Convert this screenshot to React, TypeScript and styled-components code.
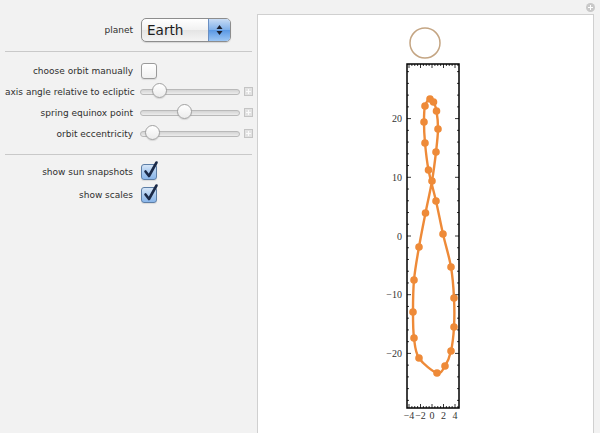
import React from 'react';
import styled, { createGlobalStyle } from 'styled-components';

const GlobalStyle = createGlobalStyle`
  html, body {
    margin: 0;
    padding: 0;
    background: #f2f2f2;
    overflow: hidden;
  }
`;

const Page = styled.div`
  display: flex;
  width: 600px;
  height: 433px;
  position: relative;
  font-family: 'DejaVu Sans', 'Liberation Sans', sans-serif;
  color: #2e2e2e;
`;

const Controls = styled.div`
  width: 247px;
  padding: 18px 5px 0 5px;
  display: flex;
  flex-direction: column;
`;

const Row = styled.div<{ h?: number }>`
  display: grid;
  grid-template-columns: 128px 1fr;
  column-gap: 7px;
  align-items: center;
  height: ${p => p.h || 21}px;
`;

const Label = styled.span`
  text-align: right;
  font-size: 9px;
  white-space: nowrap;
`;

const Divider = styled.div<{ top: number; bottom: number }>`
  height: 1px;
  background: #c9c9c9;
  margin: ${p => p.top}px 0 ${p => p.bottom}px 0;
`;

const Popup = styled.div`
  display: flex;
  width: 88px;
  height: 22px;
  margin-left: 1px;
  border: 1px solid #8d8d8d;
  border-radius: 5px;
  overflow: hidden;
  background: linear-gradient(#ffffff, #f1f1f1 50%, #e4e4e4 51%, #f4f4f4);
  box-shadow: 0 1px 1px rgba(0, 0, 0, 0.12);
`;

const PopupText = styled.span`
  flex: 1;
  padding-left: 5px;
  font-size: 13.6px;
  line-height: 22px;
  color: #1c1c1c;
`;

const PopupArrows = styled.div`
  width: 21px;
  border-left: 1px solid #6b8fc2;
  background: linear-gradient(#c8dcf5, #7fb0ea 50%, #5a98e4 51%, #9cc6f4);
  display: flex;
  align-items: center;
  justify-content: center;
`;

const Box = styled.div<{ checked?: boolean }>`
  width: 14px;
  height: 14px;
  margin-left: 1px;
  border: 1px solid ${p => (p.checked ? '#5d7ea6' : '#9a9a9a')};
  border-radius: 3px;
  background: ${p =>
    p.checked
      ? 'linear-gradient(#d6e6f8, #a7c8ee 55%, #8ab6ea)'
      : 'linear-gradient(#ffffff, #f0f0f0)'};
  position: relative;
  box-shadow: 0 1px 1px rgba(0, 0, 0, 0.1);
`;

const CheckMark = styled.svg`
  position: absolute;
  left: 1px;
  top: -5px;
`;

const SliderWrap = styled.div`
  display: flex;
  align-items: center;
  gap: 4px;
`;

const Track = styled.div`
  width: 98px;
  height: 4px;
  border: 1px solid #b9b9b9;
  border-radius: 3px;
  background: linear-gradient(#d4d4d4, #ececec);
  position: relative;
`;

const Thumb = styled.div`
  position: absolute;
  top: -7px;
  width: 15px;
  height: 15px;
  border-radius: 50%;
  border: 1px solid #a2a2a2;
  background: linear-gradient(#ffffff, #ececec);
  box-sizing: border-box;
  box-shadow: 0 1px 1px rgba(0, 0, 0, 0.12);
`;

const PlusBox = styled.div`
  width: 7px;
  height: 7px;
  border: 1px solid #c4c4c4;
  background: #e2e2e2;
  position: relative;
  &::before,
  &::after {
    content: '';
    position: absolute;
    background: #fafafa;
  }
  &::before {
    left: 3px;
    top: 1px;
    width: 1px;
    height: 5px;
  }
  &::after {
    left: 1px;
    top: 3px;
    width: 5px;
    height: 1px;
  }
`;

const PlotPanel = styled.div`
  margin-top: 14px;
  width: 335px;
  height: 425px;
  background: #ffffff;
  border: 1px solid #d0d0d0;
`;

const Corner = styled.div`
  position: absolute;
  right: 5px;
  top: 3px;
  width: 9px;
  height: 9px;
  border-radius: 50%;
  background: #c9c9c9;
  &::before,
  &::after {
    content: '';
    position: absolute;
    background: #fff;
  }
  &::before {
    left: 4px;
    top: 2px;
    width: 1px;
    height: 5px;
  }
  &::after {
    left: 2px;
    top: 4px;
    width: 5px;
    height: 1px;
  }
`;

// snapshot positions of the sun (page pixels)
const pts: [number, number][] = [
  [430, 99], [433.5, 102], [436.5, 111], [438, 129], [436, 152], [432, 181],
  [425.5, 213], [419, 247], [414, 280], [413, 312], [414, 338], [419, 358],
  [437, 373], [445, 366], [451, 351], [454, 327], [454, 298], [451, 267],
  [443, 234], [436, 201], [428.5, 170], [425, 143], [424, 122], [425, 106],
];

const closedSpline = (p: [number, number][]) => {
  const n = p.length;
  let d = `M${p[0][0]},${p[0][1]}`;
  for (let i = 0; i < n; i++) {
    const p0 = p[(i - 1 + n) % n];
    const p1 = p[i];
    const p2 = p[(i + 1) % n];
    const p3 = p[(i + 2) % n];
    const c1x = p1[0] + (p2[0] - p0[0]) / 6;
    const c1y = p1[1] + (p2[1] - p0[1]) / 6;
    const c2x = p2[0] - (p3[0] - p1[0]) / 6;
    const c2y = p2[1] - (p3[1] - p1[1]) / 6;
    d += ` C${c1x},${c1y} ${c2x},${c2y} ${p2[0]},${p2[1]}`;
  }
  return d + 'Z';
};

const X0 = 432;
const XS = 5.75;
const Y0 = 236;
const YS = 5.87;
const L = 407;
const R = 459;
const T = 64;
const B = 408;

const Plot = () => {
  const yTicks: JSX.Element[] = [];
  for (let v = -28; v <= 28; v += 2) {
    const y = Y0 - v * YS;
    const len = v % 10 === 0 ? 4 : 2;
    yTicks.push(
      <g key={'y' + v}>
        <line x1={L} y1={y} x2={L + len} y2={y} />
        <line x1={R} y1={y} x2={R - len} y2={y} />
      </g>
    );
  }
  const xTicks: JSX.Element[] = [];
  for (let v = -4; v <= 4.5; v += 0.5) {
    const x = X0 + v * XS;
    const len = v % 2 === 0 ? 4 : 2;
    xTicks.push(
      <g key={'x' + v}>
        <line x1={x} y1={B} x2={x} y2={B - len} />
        <line x1={x} y1={T} x2={x} y2={T + len} />
      </g>
    );
  }
  return (
    <svg width="335" height="425" viewBox="258 15 335 425">
      <circle cx="425" cy="43" r="15" fill="none" stroke="#c4a583" strokeWidth="1.5" />
      <g stroke="#000" strokeWidth="0.8">
        {yTicks}
        {xTicks}
      </g>
      <rect x={L} y={T} width={R - L} height={B - T} fill="none" stroke="#000" strokeWidth="1.5" />
      <g fontFamily="'Liberation Serif', serif" fontSize="10" fill="#333" textAnchor="end">
        {[20, 10, 0, -10, -20].map(v => (
          <text key={v} x="402" y={Y0 - v * YS + 3.5}>
            {v < 0 ? '\u2212' + -v : v}
          </text>
        ))}
      </g>
      <g fontFamily="'Liberation Serif', serif" fontSize="10" fill="#333" textAnchor="middle">
        {[-4, -2, 0, 2, 4].map(v => (
          <text key={v} x={X0 + v * XS} y="419">
            {v < 0 ? '\u2212' + -v : v}
          </text>
        ))}
      </g>
      <path d={closedSpline(pts)} fill="none" stroke="#ee8a38" strokeWidth="2.4" />
      <g fill="#ee8a38">
        {pts.map(([x, y], i) => (
          <circle key={i} cx={x} cy={y} r="3.8" />
        ))}
      </g>
    </svg>
  );
};

const Slider = ({ at }: { at: number }) => (
  <SliderWrap>
    <Track>
      <Thumb style={{ left: at - 7.5 }} />
    </Track>
    <PlusBox />
  </SliderWrap>
);

const Check = ({ checked }: { checked?: boolean }) => (
  <Box checked={checked}>
    {checked && (
      <CheckMark width="16" height="19" viewBox="0 0 16 19">
        <path d="M2.5 11.5 L6 16 L13.5 2.5" fill="none" stroke="#1b2a48" strokeWidth="2.6" strokeLinecap="round" strokeLinejoin="round" />
      </CheckMark>
    )}
  </Box>
);

export default function App() {
  return (
    <Page>
      <GlobalStyle />
      <Controls>
        <Row h={24}>
          <Label>planet</Label>
          <Popup>
            <PopupText>Earth</PopupText>
            <PopupArrows>
              <svg width="7" height="12" viewBox="0 0 7 12">
                <path d="M3.5 1 L6.5 5 L0.5 5 Z M3.5 11 L6.5 7 L0.5 7 Z" fill="#1d2230" />
              </svg>
            </PopupArrows>
          </Popup>
        </Row>
        <Divider top={9} bottom={8} />
        <Row>
          <Label>choose orbit manually</Label>
          <Check />
        </Row>
        <Row>
          <Label>axis angle relative to ecliptic</Label>
          <Slider at={18} />
        </Row>
        <Row>
          <Label>spring equinox point</Label>
          <Slider at={43} />
        </Row>
        <Row>
          <Label>orbit eccentricity</Label>
          <Slider at={11} />
        </Row>
        <Divider top={10} bottom={6} />
        <Row h={22}>
          <Label>show sun snapshots</Label>
          <Check checked />
        </Row>
        <Row h={23}>
          <Label>show scales</Label>
          <Check checked />
        </Row>
      </Controls>
      <PlotPanel>
        <Plot />
      </PlotPanel>
      <Corner />
    </Page>
  );
}
